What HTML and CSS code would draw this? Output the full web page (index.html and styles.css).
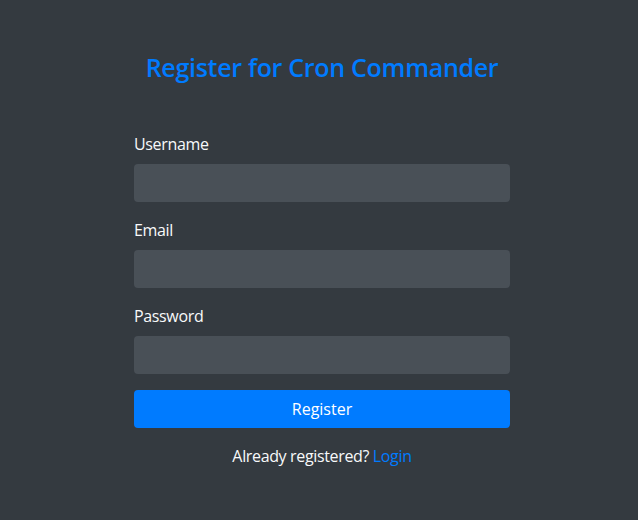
FILE: index.html
```html
<!DOCTYPE html>
<html lang="en">
<head>
<meta charset="utf-8">
<title>Register for Cron Commander</title>
<link rel="stylesheet" href="styles.css">
</head>
<body>
<main class="page">
  <div class="card">
    <h1 class="title">Register for Cron Commander</h1>
    <form class="form">
      <div class="field">
        <label class="label" for="username">Username</label>
        <input class="input" id="username" type="text">
      </div>
      <div class="field">
        <label class="label" for="email">Email</label>
        <input class="input" id="email" type="email">
      </div>
      <div class="field">
        <label class="label" for="password">Password</label>
        <input class="input" id="password" type="password">
      </div>
      <button class="btn" type="button">Register</button>
    </form>
    <p class="footer">Already registered? <a class="link" href="#">Login</a></p>
  </div>
</main>
</body>
</html>
```
FILE: styles.css
```css
* { box-sizing: border-box; }
html, body {
  margin: 0;
  padding: 0;
  background: #343a40;
  height: 100%;
}
body {
  font-family: "Open Sans", "Noto Sans", "Liberation Sans", sans-serif;
  color: #f8f9fa;
  font-size: 16px;
  letter-spacing: -0.35px;
}
.page {
  display: flex;
  justify-content: center;
  padding: 47px 0 0 6px;
}
.card {
  width: 376px;
  display: flex;
  flex-direction: column;
}
.title {
  margin: 0 0 45px;
  text-align: center;
  font-size: 25px;
  font-weight: 600;
  line-height: 40px;
  letter-spacing: -0.3px;
  color: #007bff;
}
.form {
  display: flex;
  flex-direction: column;
}
.field {
  display: flex;
  flex-direction: column;
  margin-bottom: 16px;
}
.label {
  line-height: 24px;
  margin-bottom: 8px;
}
.input {
  height: 38px;
  border: none;
  border-radius: 4px;
  background: #495057;
  color: #fff;
  font: inherit;
  padding: 6px 12px;
}
.btn {
  height: 38px;
  border: none;
  border-radius: 4px;
  background: #007bff;
  color: #fff;
  font: inherit;
  cursor: pointer;
}
.footer {
  margin: 16px 0 0;
  text-align: center;
  line-height: 24px;
}
.link {
  color: #007bff;
  text-decoration: none;
}
```
